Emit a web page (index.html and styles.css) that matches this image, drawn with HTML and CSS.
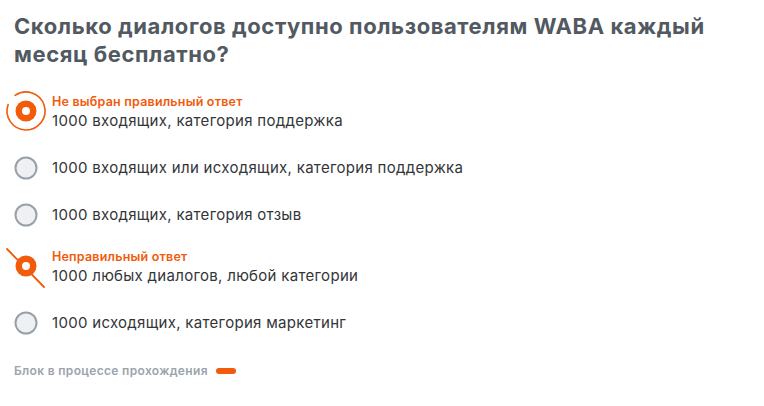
FILE: index.html
```html
<!DOCTYPE html>
<html lang="ru">
<head>
<meta charset="utf-8">
<title>Вопрос</title>
<link rel="stylesheet" href="styles.css">
</head>
<body>
<main class="quiz">
  <h1 class="quiz-title">Сколько диалогов доступно пользователям WABA каждый месяц бесплатно?</h1>
  <ul class="options">
    <li class="option option--labeled">
      <span class="radio">
        <svg viewBox="-12 -12 24 24" width="24" height="24">
          <path d="M -10.9 -15.6 A 19 19 0 1 1 -17.85 -6.5" fill="none" stroke="#f25a0c" stroke-width="1.6" stroke-linecap="round"/>
          <circle r="10.5" fill="#f25a0c"/>
          <circle r="4" fill="#fff"/>
        </svg>
      </span>
      <div class="option-body">
        <span class="option-label">Не выбран правильный ответ</span>
        <span class="option-text">1000 входящих, категория поддержка</span>
      </div>
    </li>
    <li class="option">
      <span class="radio">
        <svg viewBox="-12 -12 24 24" width="24" height="24">
          <circle r="10.5" fill="#eef0f3" stroke="#98a1a9" stroke-width="2"/>
        </svg>
      </span>
      <div class="option-body">
        <span class="option-text">1000 входящих или исходящих, категория поддержка</span>
      </div>
    </li>
    <li class="option">
      <span class="radio">
        <svg viewBox="-12 -12 24 24" width="24" height="24">
          <circle r="10.5" fill="#eef0f3" stroke="#98a1a9" stroke-width="2"/>
        </svg>
      </span>
      <div class="option-body">
        <span class="option-text">1000 входящих, категория отзыв</span>
      </div>
    </li>
    <li class="option option--labeled">
      <span class="radio">
        <svg viewBox="-12 -12 24 24" width="24" height="24">
          <line x1="-19" y1="-17" x2="18" y2="21" stroke="#f25a0c" stroke-width="1.8" stroke-linecap="round"/>
          <circle r="10.5" fill="#f25a0c"/>
          <circle r="4" fill="#fff"/>
        </svg>
      </span>
      <div class="option-body">
        <span class="option-label">Неправильный ответ</span>
        <span class="option-text">1000 любых диалогов, любой категории</span>
      </div>
    </li>
    <li class="option">
      <span class="radio">
        <svg viewBox="-12 -12 24 24" width="24" height="24">
          <circle r="10.5" fill="#eef0f3" stroke="#98a1a9" stroke-width="2"/>
        </svg>
      </span>
      <div class="option-body">
        <span class="option-text">1000 исходящих, категория маркетинг</span>
      </div>
    </li>
  </ul>
  <footer class="status">
    <span class="status-text">Блок в процессе прохождения</span>
    <span class="status-pill"></span>
  </footer>
</main>
</body>
</html>
```

FILE: styles.css
```css
html, body {
  margin: 0;
  padding: 0;
  background: #ffffff;
}

.quiz {
  padding: 12px 14px 0 14px;
  font-family: "Inter", "Roboto", sans-serif;
}

.quiz-title {
  margin: 0;
  max-width: 720px;
  font-family: "Inter", sans-serif;
  font-size: 22px;
  font-weight: 700;
  line-height: 28px;
  letter-spacing: 0.58px;
  color: #525961;
}

.options {
  list-style: none;
  margin: 26.5px 0 0 0;
  padding: 0;
  display: flex;
  flex-direction: column;
  gap: 23px;
}

.option {
  display: flex;
  align-items: center;
  gap: 14px;
}

.option--labeled {
  margin-top: -3px;
  margin-bottom: 2px;
}

.radio {
  flex: 0 0 24px;
  width: 24px;
  height: 24px;
  display: flex;
}

.radio svg {
  overflow: visible;
  display: block;
}

.option-body {
  display: flex;
  flex-direction: column;
}

.option-label {
  font-size: 12.5px;
  font-weight: 600;
  line-height: 19px;
  letter-spacing: 0.2px;
  color: #f25a0c;
}

.option-text {
  font-size: 15px;
  font-weight: 400;
  line-height: 20px;
  letter-spacing: 0.3px;
  color: #333538;
}

.status {
  margin-top: 28.5px;
  display: flex;
  align-items: center;
  gap: 8px;
}

.status-text {
  font-size: 12px;
  font-weight: 600;
  line-height: 16px;
  letter-spacing: 0.33px;
  color: #9ba4ad;
}

.status-pill {
  width: 20px;
  height: 6px;
  border-radius: 3px;
  background: #f25a0c;
}
```
